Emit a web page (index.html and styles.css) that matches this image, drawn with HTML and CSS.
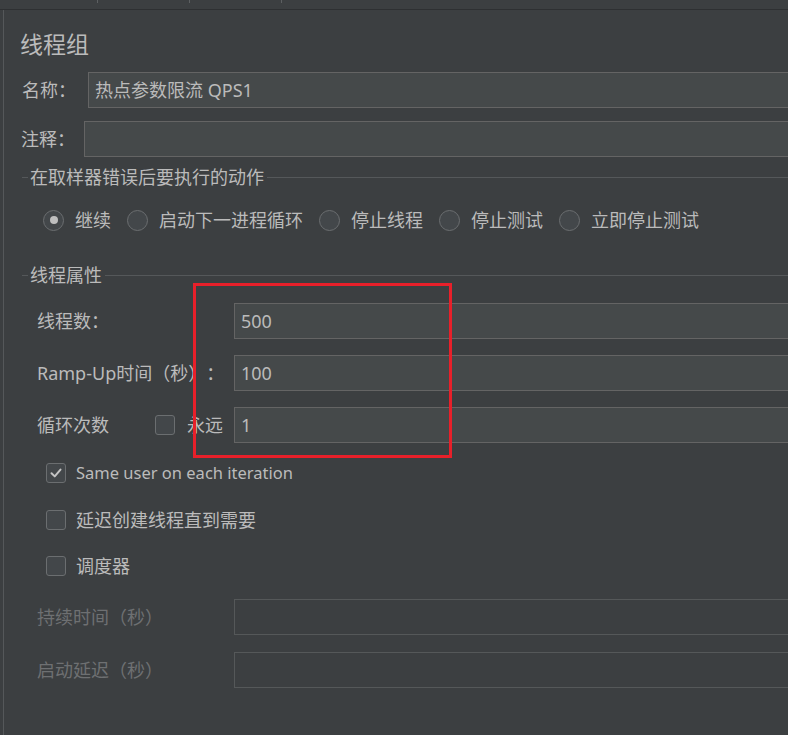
FILE: index.html
```html
<!DOCTYPE html>
<html lang="zh">
<head>
<meta charset="utf-8">
<link rel="stylesheet" href="styles.css">
</head>
<body>
<div class="tabs">
  <div class="tab"></div>
  <div class="tab t2"></div>
  <div class="tab t3"></div>
</div>
<div class="main">
  <div class="content">
    <div class="title">线程组</div>

    <div class="row field-row">
      <div class="label lbl-name">名称：</div>
      <div class="input"><span class="val">热点参数限流 QPS1</span></div>
    </div>
    <div class="row field-row r-comment">
      <div class="label lbl-comment">注释：</div>
      <div class="input"></div>
    </div>

    <div class="group-head g1"><span class="dash"></span><span class="gtext">在取样器错误后要执行的动作</span><span class="gline"></span></div>
    <div class="radios">
      <div class="radio-item"><span class="radio on"></span><span>继续</span></div>
      <div class="radio-item"><span class="radio"></span><span>启动下一进程循环</span></div>
      <div class="radio-item"><span class="radio"></span><span>停止线程</span></div>
      <div class="radio-item"><span class="radio"></span><span>停止测试</span></div>
      <div class="radio-item"><span class="radio"></span><span>立即停止测试</span></div>
    </div>

    <div class="group-head g2"><span class="dash"></span><span class="gtext">线程属性</span><span class="gline"></span></div>

    <div class="props">
      <div class="prow">
        <div class="pcol"><span>线程数：</span></div>
        <div class="input"><span class="val">500</span></div>
      </div>
      <div class="prow">
        <div class="pcol"><span>Ramp-Up时间（秒）：</span></div>
        <div class="input"><span class="val">100</span></div>
      </div>
      <div class="prow">
        <div class="pcol"><span class="loop-lbl">循环次数</span><span class="check"></span><span class="forever">永远</span></div>
        <div class="input"><span class="val">1</span></div>
      </div>

      <div class="crow c1"><span class="check on"><svg viewBox="0 0 20 20" width="20" height="20"><path d="M5 10.2 L8.6 13.8 L15 6.2" fill="none" stroke="#c4c4c4" stroke-width="2.2" stroke-linecap="round" stroke-linejoin="round"/></svg></span><span class="latin">Same user on each iteration</span></div>
      <div class="crow c2"><span class="check"></span><span>延迟创建线程直到需要</span></div>
      <div class="crow c3"><span class="check"></span><span>调度器</span></div>

      <div class="prow disabled d1">
        <div class="pcol"><span>持续时间（秒）</span></div>
        <div class="input off"></div>
      </div>
      <div class="prow disabled d2">
        <div class="pcol"><span>启动延迟（秒）</span></div>
        <div class="input off"></div>
      </div>
    </div>
  </div>
  <div class="highlight"></div>
</div>
</body>
</html>
```

FILE: styles.css
```css
* { box-sizing: border-box; }
html, body { margin: 0; padding: 0; }
body {
  width: 788px;
  height: 735px;
  overflow: hidden;
  background: #3c3f41;
  color: #bbbbbb;
  font-family: "Noto Sans", "Noto Sans CJK SC", sans-serif;
  font-size: 18px;
  text-spacing-trim: space-all;
}
.tabs {
  display: flex;
  height: 10px;
  border-bottom: 1px solid #2e3032;
}
.tab {
  width: 98px;
  height: 3px;
  border-right: 1px solid #5d6062;
}
.tab.t2 { width: 92px; }
.tab.t3 { width: 92px; }
.main {
  position: relative;
  margin-left: 3px;
  border-left: 1px solid #55585a;
  height: 725px;
  overflow: hidden;
}
.content {
  padding-left: 17px;
  padding-top: 20px;
}
.title {
  font-size: 23px;
  line-height: 28px;
  height: 28px;
  margin-left: -1px;
}
.row { display: flex; align-items: center; }
.field-row { margin-top: 14px; }
.field-row.r-comment { margin-top: 13px; }
.label { flex: none; line-height: 20px; }
.lbl-name { width: 66px; margin-left: 1px; }
.lbl-comment { width: 63px; }
.input {
  flex: 1;
  height: 36px;
  margin-right: -20px;
  background: #45494a;
  border: 1px solid #646464;
  display: flex;
  align-items: center;
  padding-left: 6px;
  line-height: 20px;
}
.input.off {
  background: transparent;
  border-color: #555859;
}
.val { color: #bbbbbb; }
.group-head {
  display: flex;
  align-items: center;
  height: 20px;
  margin-left: 1px;
}
.g1 { margin-top: 10px; }
.g2 { margin-top: 33px; }
.dash {
  width: 6px;
  border-top: 1px solid #55585a;
  margin-right: 2px;
}
.gtext { line-height: 20px; }
.gline {
  flex: 1;
  border-top: 1px solid #55585a;
  margin-left: 3px;
}
.radios {
  display: flex;
  align-items: center;
  height: 24px;
  margin-top: 21px;
  margin-left: 22px;
  gap: 16px;
}
.radio-item {
  display: flex;
  align-items: center;
  gap: 11px;
  line-height: 20px;
}
.radio {
  width: 21px;
  height: 21px;
  border-radius: 50%;
  border: 1px solid #6b6e70;
  background: #43474a;
  display: flex;
  align-items: center;
  justify-content: center;
}
.radio.on::after {
  content: "";
  width: 8px;
  height: 8px;
  border-radius: 50%;
  background: #bfbfbf;
}
.props { margin-left: 16px; }
.prow {
  display: flex;
  align-items: center;
  margin-top: 16px;
}
.props .prow:first-child { margin-top: 18px; }
.pcol {
  width: 197px;
  flex: none;
  display: flex;
  align-items: center;
  line-height: 20px;
}
.loop-lbl { width: 118px; }
.check {
  width: 20px;
  height: 20px;
  flex: none;
  border: 1px solid #6b6e70;
  border-radius: 3px;
  background: #43474a;
  display: flex;
  align-items: center;
  justify-content: center;
}
.check svg { display: block; }
.forever { margin-left: 12px; }
.crow {
  display: flex;
  align-items: center;
  gap: 10px;
  height: 20px;
  margin-left: 9px;
  line-height: 20px;
}
.c1 { margin-top: 20px; }
.c2 { margin-top: 27px; }
.c3 { margin-top: 26px; }
.latin { font-size: 16.5px; }
.disabled { color: #6e7072; }
.d1 { margin-top: 23px; }
.d2 { margin-top: 17px; }
.highlight {
  position: absolute;
  left: 189px;
  top: 273px;
  width: 259px;
  height: 175px;
  border: 3px solid #e8202a;
}
```
